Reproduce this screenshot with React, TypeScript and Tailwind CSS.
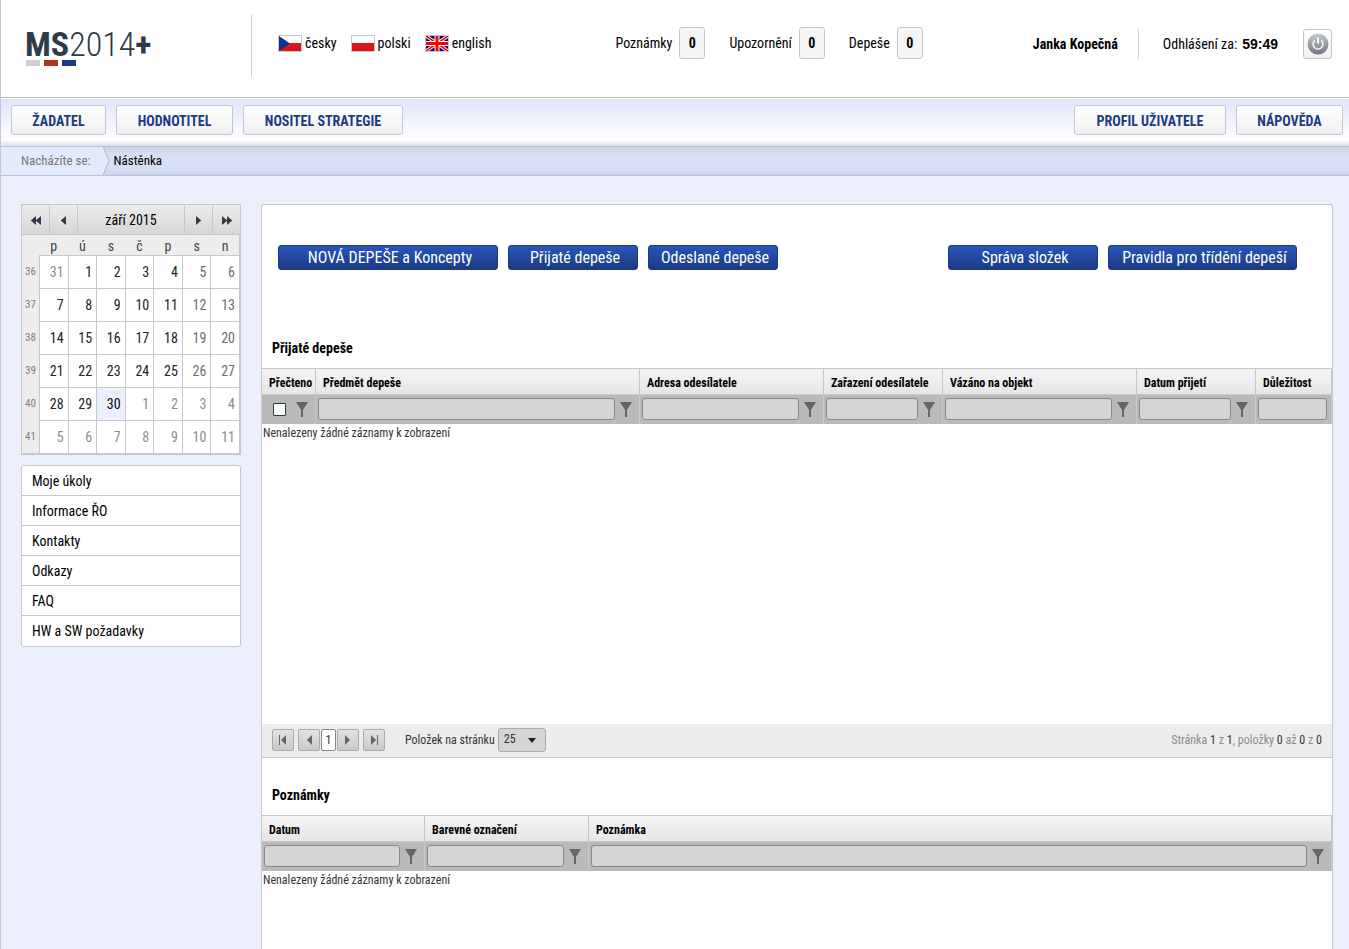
import type { ReactNode } from 'react';

const FONT = "font-['Roboto_Condensed','Liberation_Sans_Narrow',Roboto,sans-serif]";

function CzechFlag() {
  return (
    <svg width="24" height="17" viewBox="0 0 24 17" aria-hidden="true">
      <rect width="24" height="17" fill="#c8c8c8" />
      <rect x="1" y="1" width="22" height="7" fill="#fff" />
      <rect x="1" y="8" width="22" height="8" fill="#dc141e" />
      <path d="M1 1 12 8.5 1 16Z" fill="#0d3689" />
    </svg>
  );
}

function PolishFlag() {
  return (
    <svg width="24" height="17" viewBox="0 0 24 17" aria-hidden="true">
      <rect width="24" height="17" fill="#c8c8c8" />
      <rect x="1" y="1" width="22" height="7" fill="#fff" />
      <rect x="1" y="8" width="22" height="8" fill="#dc141e" />
    </svg>
  );
}

function BritishFlag() {
  return (
    <svg width="24" height="17" viewBox="0 0 24 17" aria-hidden="true">
      <rect width="24" height="17" fill="#c8c8c8" />
      <svg x="1" y="1" width="22" height="15" viewBox="0 0 22 15">
        <rect width="22" height="15" fill="#00007d" />
        <path d="M0 0 22 15M22 0 0 15" stroke="#fff" strokeWidth="3.4" />
        <path d="M0 0 22 15M22 0 0 15" stroke="#ff0000" strokeWidth="1.6" />
        <path d="M11 0V15M0 7.5H22" stroke="#fff" strokeWidth="5" />
        <path d="M11 0V15M0 7.5H22" stroke="#ff0000" strokeWidth="3" />
      </svg>
    </svg>
  );
}

function PowerIcon() {
  return (
    <svg width="22" height="22" viewBox="0 0 22 22" aria-hidden="true">
      <defs>
        <linearGradient id="power" x1="0" y1="0" x2="0" y2="1">
          <stop offset="0" stopColor="#c8cacf" />
          <stop offset="1" stopColor="#70757f" />
        </linearGradient>
      </defs>
      <circle cx="11" cy="11" r="10.5" fill="url(#power)" />
      <path d="M7.8 7.4A4.9 4.9 0 1 0 14.2 7.4" fill="none" stroke="#f4f4f4" strokeWidth="1.7" />
      <path d="M11 4.5V10.5" stroke="#fff" strokeWidth="1.8" />
    </svg>
  );
}

function FunnelIcon() {
  return (
    <svg width="12" height="15" viewBox="0 0 12 15" aria-hidden="true">
      <path d="M0 0H12L7 8V15H5V8Z" fill="#666" />
    </svg>
  );
}

function ArrowIcon({ flip, count = 1 }: { flip?: boolean; count?: number }) {
  const w = count * 5;
  return (
    <svg width={w} height="9" viewBox={`0 0 ${w} 9`} aria-hidden="true">
      {Array.from({ length: count }, (_, i) => (
        <path
          key={i}
          d={flip ? `M${i * 5} 0 ${i * 5 + 5.4} 4.5 ${i * 5} 9Z` : `M${i * 5 + 5} 0 ${i * 5 - 0.4} 4.5 ${i * 5 + 5} 9Z`}
          fill="#2f3a48"
        />
      ))}
    </svg>
  );
}

function PagerIcon({ flip, bar }: { flip?: boolean; bar?: boolean }) {
  return (
    <svg width="8" height="10" viewBox="0 0 8 10" aria-hidden="true">
      {flip ? <path d="M1 0 6 5 1 10Z" fill="#666" /> : <path d="M7 0 2 5 7 10Z" fill="#666" />}
      {bar && <rect x={flip ? 7 : 0} width="1" height="10" fill="#666" />}
    </svg>
  );
}

function Counter({ label, value }: { label: string; value: number }) {
  return (
    <a href="#" className="flex items-center gap-[7px]">
      <span>{label}</span>
      <span className="flex h-8 w-[26px] items-center justify-center rounded-[3px] border border-[#c8c8c8] bg-[#f5f5f5] font-bold">
        {value}
      </span>
    </a>
  );
}

function NavButton({ children, size }: { children: ReactNode; size: string }) {
  return (
    <button
      className={`h-[30px] whitespace-nowrap rounded-[3px] border border-[#c5c8d0] bg-linear-to-b from-white to-[#f1f1f1] pt-0.5 text-[14px] font-bold text-[#1c3a85] ${size}`}
    >
      {children}
    </button>
  );
}

function BlueButton({ children, size }: { children: ReactNode; size: string }) {
  return (
    <button
      className={`h-[25px] whitespace-nowrap rounded-[3px] border border-[#17398a] bg-linear-to-b from-[#2a56b8] to-[#1a3a86] pl-1 text-center text-[16px] leading-6 text-white ${size}`}
    >
      {children}
    </button>
  );
}

const calButton = 'flex w-7 items-center justify-center border-[#c8c8c8] pt-px';

const weeks: [number, number[]][] = [
  [36, [31, 1, 2, 3, 4, 5, 6]],
  [37, [7, 8, 9, 10, 11, 12, 13]],
  [38, [14, 15, 16, 17, 18, 19, 20]],
  [39, [21, 22, 23, 24, 25, 26, 27]],
  [40, [28, 29, 30, 1, 2, 3, 4]],
  [41, [5, 6, 7, 8, 9, 10, 11]],
];

function dayStyle(week: number, day: number, column: number) {
  const otherMonth = (week === 36 && day > 20) || (week >= 40 && day < 20);
  if (otherMonth) return 'bg-white text-[#8c8c8c]';
  if (week === 40 && day === 30) return 'bg-[#ecf0fd] text-black';
  return column > 4 ? 'bg-white text-[#6e6e6e]' : 'bg-white text-[#222]';
}

function Calendar() {
  return (
    <section className="border border-[#c8c8c8] bg-[#ededed]" aria-label="Kalendář">
      <div className="flex h-[30px] border-b border-[#c8c8c8] bg-linear-to-b from-[#ececec] to-[#d6d6d6]">
        <button aria-label="O rok zpět" className={`${calButton} border-r`}><ArrowIcon count={2} /></button>
        <button aria-label="Předchozí měsíc" className={`${calButton} border-r`}><ArrowIcon /></button>
        <div className="flex flex-1 items-center justify-center pt-0.5 text-[14px] text-black">září 2015</div>
        <button aria-label="Další měsíc" className={`${calButton} border-l`}><ArrowIcon flip /></button>
        <button aria-label="O rok vpřed" className={`${calButton} border-l`}><ArrowIcon flip count={2} /></button>
      </div>
      <table className="w-full table-fixed border-separate border-spacing-0 border-b border-r border-[#c8c8c8] text-[14px]">
        <colgroup>
          <col className="w-[17px]" />
        </colgroup>
        <thead>
          <tr className="h-5 text-[#444]">
            <td />
            {['p', 'ú', 's', 'č', 'p', 's', 'n'].map((d, i) => (
              <th key={i} scope="col" className="p-0 pl-px pt-0.5 text-center font-normal leading-[18px]">{d}</th>
            ))}
          </tr>
        </thead>
        <tbody>
          {weeks.map(([week, days]) => (
            <tr key={week}>
              <th scope="row" className="p-0 pt-0.5 text-center text-[11px] font-normal text-[#808080]">{week}</th>
              {days.map((day, i) => (
                <td
                  key={i}
                  className={`h-[33px] border-l border-t border-[#c8c8c8] p-0 pr-1 text-right ${dayStyle(week, day, i)}`}
                >
                  {day}
                </td>
              ))}
            </tr>
          ))}
        </tbody>
      </table>
    </section>
  );
}

type Column = { title: string; width: string; kind?: 'check' | 'plain' };

const messageColumns: Column[] = [
  { title: 'Přečteno', width: 'w-[54px]', kind: 'check' },
  { title: 'Předmět depeše', width: '' },
  { title: 'Adresa odesílatele', width: 'w-[184px]' },
  { title: 'Zařazení odesílatele', width: 'w-[119px]' },
  { title: 'Vázáno na objekt', width: 'w-[194px]' },
  { title: 'Datum přijetí', width: 'w-[119px]' },
  { title: 'Důležitost', width: 'w-[76px]', kind: 'plain' },
];

const noteColumns: Column[] = [
  { title: 'Datum', width: 'w-[163px]' },
  { title: 'Barevné označení', width: 'w-[164px]' },
  { title: 'Poznámka', width: '' },
];

function FilterCell({ column }: { column: Column }) {
  const funnel = (
    <button aria-label={`Filtr: ${column.title}`} className="shrink-0"><FunnelIcon /></button>
  );
  if (column.kind === 'check') {
    return (
      <div className="flex items-center justify-between pl-[11px] pr-[7px]">
        <input
          type="checkbox"
          aria-label={column.title}
          className="size-[13px] appearance-none rounded-[1px] border border-[#1c3f3f] bg-white checked:bg-[#1c3a85]"
        />
        {funnel}
      </div>
    );
  }
  return (
    <div className={`flex items-center gap-[5px] pl-0.5 ${column.kind === 'plain' ? 'pr-1' : 'pr-[7px]'}`}>
      <input
        type="text"
        aria-label={column.title}
        className="h-[22px] w-0 min-w-0 flex-1 rounded-[3px] border border-[#888] bg-[#d5d5d5] px-1 text-[12px]"
      />
      {column.kind !== 'plain' && funnel}
    </div>
  );
}

function DataTable({ columns }: { columns: Column[] }) {
  return (
    <table className="w-full table-fixed border-separate border-spacing-0 text-[12px]">
      <colgroup>
        {columns.map((c) => <col key={c.title} className={c.width} />)}
      </colgroup>
      <thead>
        <tr className="bg-linear-to-b from-[#f6f6f6] to-[#e5e5e5]">
          {columns.map((c) => (
            <th
              key={c.title}
              scope="col"
              className="h-[27px] whitespace-nowrap border-y border-r border-[#c8c8c8] p-0 pl-[7px] pt-0.5 text-left font-bold text-black"
            >
              {c.title}
            </th>
          ))}
        </tr>
        <tr className="bg-[#bababa]">
          {columns.map((c) => (
            <td key={c.title} className="h-[29px] border-r border-[#c8c8c8] p-0 pb-px"><FilterCell column={c} /></td>
          ))}
        </tr>
      </thead>
      <tbody>
        <tr>
          <td colSpan={columns.length} className="h-[300px] p-px align-top leading-4 text-[#333]">
            Nenalezeny žádné záznamy k zobrazení
          </td>
        </tr>
      </tbody>
    </table>
  );
}

const pagerButton =
  'flex size-[22px] items-center justify-center rounded-[2px] border border-[#aaa] bg-linear-to-b from-[#e4e4e4] to-[#c8c8c8]';

function Pager() {
  return (
    <div className="flex h-[34px] items-center border-b border-[#c8c8c8] bg-[#ededed] px-2.5 pb-px text-[12px] text-[#333]">
      <button aria-label="První stránka" className={`${pagerButton} mr-1`}><PagerIcon bar /></button>
      <button aria-label="Předchozí stránka" className={pagerButton}><PagerIcon /></button>
      <button className="mx-px h-[22px] w-[15px] rounded-[2px] border border-[#888] bg-white">1</button>
      <button aria-label="Další stránka" className={pagerButton}><PagerIcon flip /></button>
      <button aria-label="Poslední stránka" className={`${pagerButton} ml-1`}><PagerIcon flip bar /></button>
      <label htmlFor="page-size" className="ml-5 mr-[3px] pb-px">Položek na stránku</label>
      <div className="relative">
        <select
          id="page-size"
          defaultValue="25"
          className="block h-6 w-12 appearance-none rounded-[3px] border border-[#aaa] bg-[#d5d5d5] pb-0.5 pl-[5px] text-[12px]"
        >
          <option>10</option>
          <option>25</option>
          <option>50</option>
        </select>
        <svg width="8" height="5" viewBox="0 0 8 5" className="pointer-events-none absolute right-[10px] top-[10px]" aria-hidden="true">
          <path d="M0 0H8L4 5Z" fill="#222" />
        </svg>
      </div>
      <p className="ml-auto pb-px text-[#8c8c8c]">
        Stránka <span className="text-[#333]">1</span> z <span className="text-[#333]">1</span>, položky{' '}
        <span className="text-[#333]">0</span> až <span className="text-[#333]">0</span> z{' '}
        <span className="text-[#333]">0</span>
      </p>
    </div>
  );
}

const menu = ['Moje úkoly', 'Informace ŘO', 'Kontakty', 'Odkazy', 'FAQ', 'HW a SW požadavky'];

export default function App() {
  return (
    <div className={`flex h-screen flex-col overflow-hidden border-l border-[#c0c8e0] bg-[#ecf0fd] text-[14px] text-black ${FONT}`}>
      <header className="flex h-[98px] shrink-0 items-start whitespace-nowrap border-b border-[#bbb] bg-white pr-[17px]">
        <a href="#" className="mt-[14px] block h-[63px] w-[251px] shrink-0 border-r border-[#d5d5d5] pl-6 pt-[9px] text-[#2f3b49]">
          <span className="block text-[34px] leading-[42px]">
            <b>MS</b>
            <span className="font-light">2014</span>
            <b>+</b>
          </span>
          <span className="-mt-[5px] ml-px flex gap-1">
            <span className="h-1.5 w-[14px] bg-[#d0cece]" />
            <span className="h-1.5 w-[14px] bg-[#b0371e]" />
            <span className="h-1.5 w-[14px] bg-[#1a3a86]" />
          </span>
        </a>
        <nav aria-label="Jazyk" className="ml-[26px] mr-[14px] mt-[27px] flex h-8 items-center gap-[14px]">
          <a href="#" className="flex items-center gap-[3px]"><CzechFlag />česky</a>
          <a href="#" className="flex items-center gap-[3px]"><PolishFlag />polski</a>
          <a href="#" className="flex items-center gap-[3px]"><BritishFlag />english</a>
        </nav>
        <div className="ml-auto mt-[27px] flex gap-6">
          <Counter label="Poznámky" value={0} />
          <Counter label="Upozornění" value={0} />
          <Counter label="Depeše" value={0} />
        </div>
        <div className="ml-auto mt-[29px] flex h-[30px] items-center">
          <b className="border-r border-[#d5d5d5] pr-5 leading-[30px]">Janka Kopečná</b>
          <span className="flex items-center gap-[5px] pl-6">
            <span>Odhlášení za:</span>
            <b className="font-['Liberation_Sans',sans-serif]">59:49</b>
          </span>
          <button aria-label="Odhlásit" className="ml-[25px] flex h-[30px] w-[29px] items-center justify-center rounded-[3px] border border-[#c5c5c5] bg-linear-to-b from-white to-[#f1f1f1]">
            <PowerIcon />
          </button>
        </div>
      </header>

      <nav className="flex h-[49px] shrink-0 items-start gap-2.5 border-b border-[#bcc2ce] bg-[linear-gradient(#fff_1px,#dfe6fb_1px,#fff_42px,#d9dfee)] pl-2.5 pr-1.5 pt-[7px]">
        <NavButton size="w-[95px]">ŽADATEL</NavButton>
        <NavButton size="w-[117px]">HODNOTITEL</NavButton>
        <NavButton size="w-[160px]">NOSITEL STRATEGIE</NavButton>
        <div className="flex-1" />
        <NavButton size="w-[152px]">PROFIL UŽIVATELE</NavButton>
        <NavButton size="w-[107px]">NÁPOVĚDA</NavButton>
      </nav>

      <div className="flex h-[29px] shrink-0 items-center border-b border-[#bac3da] bg-[linear-gradient(#c9d2e4,#d7dff5_8px,#d7dff5_22px,#ccd5ea)] text-[13px]">
        <span className="flex h-full items-center bg-[#e4eafd] pl-5 pr-3 text-[#777]">Nacházíte se:</span>
        <svg width="7" height="28" viewBox="0 0 7 28" aria-hidden="true">
          <path d="M0 0 6 14 0 28Z" fill="#e4eafd" />
          <path d="M0 0 6 14 0 28" fill="none" stroke="#aeb8cf" />
        </svg>
        <a href="#" className="pl-1">Nástěnka</a>
      </div>

      <div className="flex min-h-0 flex-1 items-stretch gap-5 pl-5 pr-4 pt-7">
        <aside className="w-[220px] shrink-0">
          <Calendar />
          <ul className="mt-2.5 rounded-[3px] border border-[#c8c8c8] bg-white">
            {menu.map((item) => (
              <li key={item} className="h-[30px] border-b border-[#c8c8c8] last:border-b-0">
                <a href="#" className="block px-2.5 leading-[30px]">{item}</a>
              </li>
            ))}
          </ul>
        </aside>

        <main className="min-w-0 flex-1 overflow-hidden rounded-t-[3px] border border-b-0 border-[#c8c8c8] bg-white">
          <div className="flex gap-2.5 pb-[66px] pl-4 pr-[35px] pt-10">
            <BlueButton size="w-[220px]">NOVÁ DEPEŠE a Koncepty</BlueButton>
            <BlueButton size="w-[130px]">Přijaté depeše</BlueButton>
            <BlueButton size="w-[130px]">Odeslané depeše</BlueButton>
            <div className="flex-1" />
            <BlueButton size="w-[150px]">Správa složek</BlueButton>
            <BlueButton size="w-[189px]">Pravidla pro třídění depeší</BlueButton>
          </div>
          <h2 className="h-8 px-2.5 text-[14px] font-bold leading-6">Přijaté depeše</h2>
          <DataTable columns={messageColumns} />
          <Pager />
          <h2 className="mt-[25px] h-8 px-2.5 text-[14px] font-bold leading-6">Poznámky</h2>
          <DataTable columns={noteColumns} />
        </main>
      </div>
    </div>
  );
}
